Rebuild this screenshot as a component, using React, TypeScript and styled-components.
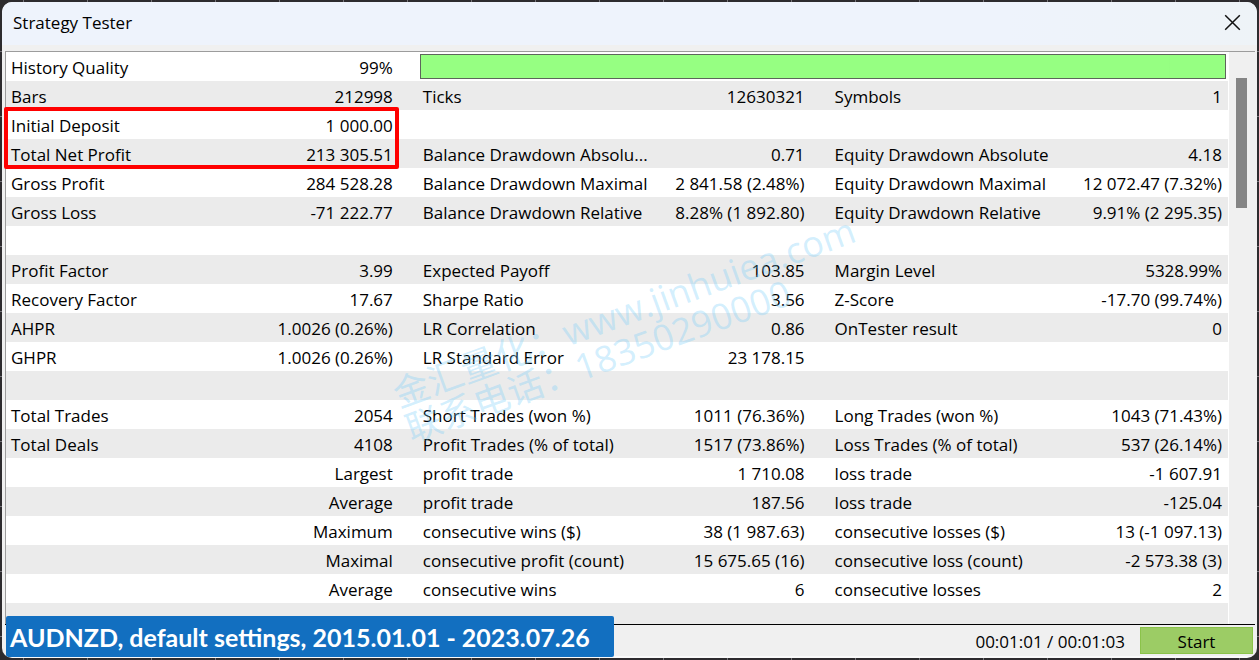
import React from "react";
import styled, { createGlobalStyle } from "styled-components";

const GlobalStyle = createGlobalStyle`
  *, *::before, *::after { box-sizing: border-box; }
  body {
    margin: 0;
    background: #2d2b2e;
    color: #000;
    font-family: "Open Sans", "Noto Sans", "Noto Sans CJK SC", sans-serif;
    font-size: 17px;
  }
`;

const Desktop = styled.div`
  height: 100vh;
  padding: 2px;
  background:
    repeating-linear-gradient(90deg, transparent 0 23px, #77757a 23px 24px, transparent 24px 64px),
    repeating-linear-gradient(180deg, transparent 0 51px, #77757a 51px 52px, transparent 52px 65px),
    #2d2b2e;
`;

const Dialog = styled.main`
  position: relative;
  display: flex;
  flex-direction: column;
  height: 100%;
  padding-bottom: 2px;
  overflow: hidden;
  background: linear-gradient(0deg, #fafafa 2px, #f0f0f0 2px);
  border-radius: 10px;
`;

const TitleBar = styled.header`
  display: flex;
  flex: none;
  align-items: center;
  justify-content: space-between;
  height: 43px;
  padding: 0 16px 2px 11px;
  background: linear-gradient(90deg, #eef3fc 80%, #eef3f7);
`;

const Title = styled.h1`
  margin: 0;
  font-size: 17px;
  font-weight: 400;
  line-height: 41px;
`;

const CloseButton = styled.button`
  display: flex;
  padding: 0;
  border: 0;
  background: none;
  color: #111;
`;

const Pane = styled.section`
  display: flex;
  flex: 1;
  min-height: 0;
  margin: 6px 2px 0 3px;
  border-top: 1px solid #9c9c9c;
  border-left: 1px solid #9c9c9c;
  background: #fff;
  overflow: hidden;
`;

const TableArea = styled.div`
  flex: 1;
  min-width: 0;
`;

const ReportTable = styled.table`
  width: 100%;
  table-layout: fixed;
  border-collapse: collapse;
`;

const Row = styled.tr`
  height: 29px;
  &:nth-child(even) { background: #ebebeb; }
`;

const Cell = styled.td<{ $value?: boolean }>`
  height: 29px;
  padding: ${(p) => (p.$value ? "2px 25px 0 0" : "2px 0 0 5px")};
  text-align: ${(p) => (p.$value ? "right" : "left")};
  line-height: 27px;
  white-space: nowrap;
  &:last-child { padding-right: 6px; }
`;

const BarCell = styled.td`
  padding: 0 2px;
`;

const QualityBar = styled.div`
  height: 25px;
  border: 1px solid #5d665b;
  background: linear-gradient(90deg, transparent 93%, #86e878 93%, transparent 93.1%), #96ff82;
`;

const ScrollTrack = styled.div`
  flex: none;
  width: 26px;
  margin-left: 1px;
  padding: 26px 8px 0 7px;
  background: #f0f0f0;
`;

const ScrollThumb = styled.div`
  width: 11px;
  height: 130px;
  background: #858585;
`;

const Footer = styled.footer`
  display: flex;
  flex: none;
  align-items: center;
  justify-content: flex-end;
  gap: 15px;
  height: 32px;
  margin: 0 2px 0 3px;
  padding: 0 2px 0 0;
  border-top: 1px solid #000;
`;

const Elapsed = styled.span`
  line-height: 28px;
  padding-top: 2px;
`;

const StartButton = styled.button`
  width: 113px;
  height: 27px;
  padding: 2px 0 0;
  border: 1px solid #8bc34a;
  background: #9ccc65;
  color: #000;
  font: inherit;
  line-height: 23px;
`;

const Highlight = styled.div`
  position: absolute;
  top: 105px;
  left: 2px;
  width: 32%;
  max-width: 395px;
  height: 62px;
  border: 4px solid #ff0000;
  border-radius: 2px;
  pointer-events: none;
`;

const Caption = styled.p`
  position: absolute;
  bottom: 1px;
  left: 4px;
  width: 608px;
  height: 41px;
  margin: 0;
  padding-left: 4px;
  border-radius: 2px;
  background: #126fc0;
  color: #fff;
  font-family: Lato, "Open Sans", sans-serif;
  font-size: 25px;
  font-weight: 700;
  line-height: 42px;
  white-space: nowrap;
`;

const Watermark = styled.p`
  position: absolute;
  top: 376px;
  left: 386px;
  margin: 0;
  color: rgba(118, 205, 250, 0.33);
  font-size: 36px;
  line-height: 37px;
  white-space: nowrap;
  transform: rotate(-20deg);
  transform-origin: 0 0;
  pointer-events: none;
`;

const rows: string[][] = [
  ["Bars", "212998", "Ticks", "12630321", "Symbols", "1"],
  ["Initial Deposit", "1 000.00", "", "", "", ""],
  ["Total Net Profit", "213 305.51", "Balance Drawdown Absolu...", "0.71", "Equity Drawdown Absolute", "4.18"],
  ["Gross Profit", "284 528.28", "Balance Drawdown Maximal", "2 841.58 (2.48%)", "Equity Drawdown Maximal", "12 072.47 (7.32%)"],
  ["Gross Loss", "-71 222.77", "Balance Drawdown Relative", "8.28% (1 892.80)", "Equity Drawdown Relative", "9.91% (2 295.35)"],
  ["", "", "", "", "", ""],
  ["Profit Factor", "3.99", "Expected Payoff", "103.85", "Margin Level", "5328.99%"],
  ["Recovery Factor", "17.67", "Sharpe Ratio", "3.56", "Z-Score", "-17.70 (99.74%)"],
  ["AHPR", "1.0026 (0.26%)", "LR Correlation", "0.86", "OnTester result", "0"],
  ["GHPR", "1.0026 (0.26%)", "LR Standard Error", "23 178.15", "", ""],
  ["", "", "", "", "", ""],
  ["Total Trades", "2054", "Short Trades (won %)", "1011 (76.36%)", "Long Trades (won %)", "1043 (71.43%)"],
  ["Total Deals", "4108", "Profit Trades (% of total)", "1517 (73.86%)", "Loss Trades (% of total)", "537 (26.14%)"],
  ["", "Largest", "profit trade", "1 710.08", "loss trade", "-1 607.91"],
  ["", "Average", "profit trade", "187.56", "loss trade", "-125.04"],
  ["", "Maximum", "consecutive wins ($)", "38 (1 987.63)", "consecutive losses ($)", "13 (-1 097.13)"],
  ["", "Maximal", "consecutive profit (count)", "15 675.65 (16)", "consecutive loss (count)", "-2 573.38 (3)"],
  ["", "Average", "consecutive wins", "6", "consecutive losses", "2"],
  ["", "", "", "", "", ""],
];

const columns = ["19%", "14.7%", "19%", "14.7%", "19%", "13.6%"];

export default function App() {
  return (
    <>
      <GlobalStyle />
      <Desktop>
        <Dialog>
          <TitleBar>
            <Title>Strategy Tester</Title>
            <CloseButton type="button" aria-label="Close">
              <svg width="17" height="17" viewBox="0 0 17 17" fill="none" stroke="currentColor" strokeWidth="1.5">
                <path d="M1.2 1.2 15.8 15.8M15.8 1.2 1.2 15.8" />
              </svg>
            </CloseButton>
          </TitleBar>
          <Pane>
            <TableArea>
              <ReportTable>
                <colgroup>
                  {columns.map((width, i) => (
                    <col key={i} width={width} />
                  ))}
                </colgroup>
                <tbody>
                  <Row>
                    <Cell>History Quality</Cell>
                    <Cell $value>99%</Cell>
                    <BarCell colSpan={4}>
                      <QualityBar role="progressbar" aria-label="History Quality" aria-valuenow={99} />
                    </BarCell>
                  </Row>
                  {rows.map((cells, r) => (
                    <Row key={r}>
                      {cells.map((text, c) => (
                        <Cell key={c} $value={c % 2 === 1}>
                          {text}
                        </Cell>
                      ))}
                    </Row>
                  ))}
                </tbody>
              </ReportTable>
            </TableArea>
            <ScrollTrack>
              <ScrollThumb />
            </ScrollTrack>
          </Pane>
          <Footer>
            <Elapsed>00:01:01 / 00:01:03</Elapsed>
            <StartButton type="button">Start</StartButton>
          </Footer>
          <Highlight />
          <Watermark>
            金汇量化：www.jinhuiea.com
            <br />
            联系电话：18350290000
          </Watermark>
          <Caption>AUDNZD, default settings, 2015.01.01 - 2023.07.26</Caption>
        </Dialog>
      </Desktop>
    </>
  );
}
